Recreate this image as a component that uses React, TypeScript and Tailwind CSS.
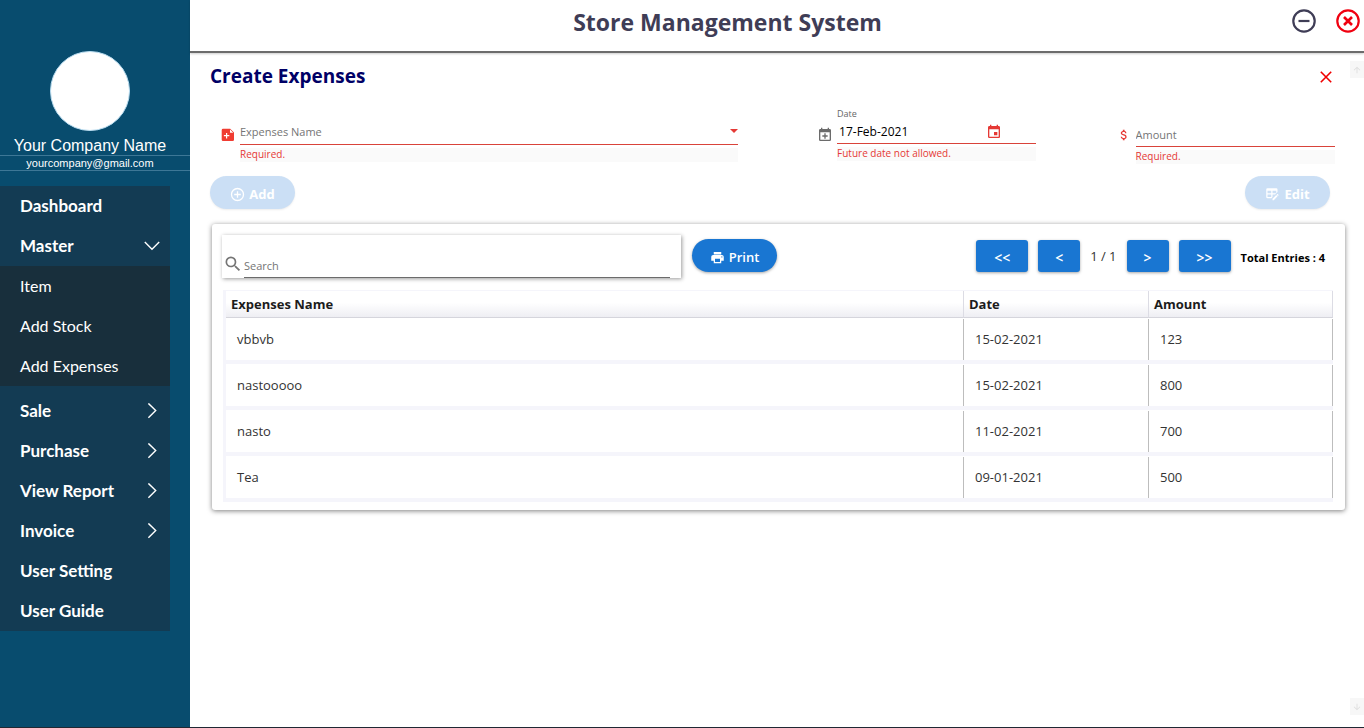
import React, { useState } from "react";
import { MdAttachMoney, MdEvent, MdLocalPrintshop, MdSearch, MdArrowUpward, MdArrowDownward } from "react-icons/md";

const expenses = [
  { name: "vbbvb", date: "15-02-2021", amount: "123" },
  { name: "nastooooo", date: "15-02-2021", amount: "800" },
  { name: "nasto", date: "11-02-2021", amount: "700" },
  { name: "Tea", date: "09-01-2021", amount: "500" },
];

const masterItems = ["Item", "Add Stock", "Add Expenses"];

const otherItems = [
  { label: "Sale", expandable: true },
  { label: "Purchase", expandable: true },
  { label: "View Report", expandable: true },
  { label: "Invoice", expandable: true },
  { label: "User Setting", expandable: false },
  { label: "User Guide", expandable: false },
];

function Chevron({ down = false }: { down?: boolean }) {
  return (
    <svg width="16" height="16" viewBox="0 0 16 16" fill="none" stroke="currentColor" strokeWidth="1.4" aria-hidden="true">
      <path d={down ? "M.8 4 8 11.2l7.2-7.2" : "M4.400.4 11.700 7.600l-7.300 7.200"} />
    </svg>
  );
}

function FileAddIcon() {
  return (
    <svg width="14" height="14" viewBox="0 0 14 14" aria-hidden="true">
      <path fill="#f03c32" d="M2 .8h7.2L13 4.6v7.2a1.3 1.3 0 0 1-1.3 1.3H2a1.3 1.3 0 0 1-1.3-1.3V2A1.3 1.3 0 0 1 2 .8Z" />
      <path fill="#fff" d="M9 1.6v3.2h3.3ZM5 5h1.2v2.100h2.100v1.200H6.200v2.100H5V8.300H2.900V7.100H5Z" />
    </svg>
  );
}

function CalendarPlusIcon() {
  return (
    <svg width="16" height="16" viewBox="0 0 24 24" fill="#6b6b6b" aria-hidden="true">
      <path d="M19 19V8H5v11h14M16 1h2v2h1a2 2 0 0 1 2 2v14a2 2 0 0 1-2 2H5a2 2 0 0 1-2-2V5c0-1.100.9-2 2-2h1V1h2v2h8V1m-5 8.500h2v3h3v2h-3v3h-2v-3H8v-2h3v-3Z" />
    </svg>
  );
}

function TableEditIcon() {
  return (
    <svg width="15" height="15" viewBox="0 0 24 24" fill="currentColor" aria-hidden="true">
      <path d="m21.700 13.350-1 1-2.050-2 1-1a.55.55 0 0 1 .77 0l1.280 1.280c.21.21.21.56 0 .72M12 18.940l6.060-6.120 2.060 2.060L14.060 21H12v-2.060M4 2h14a2 2 0 0 1 2 2v4.170L16.170 12H12v4.170L10.170 18H4a2 2 0 0 1-2-2V4a2 2 0 0 1 2-2m0 4v4h6V6H4m8 0v4h6V6h-6m-8 6v4h6v-4H4Z" />
    </svg>
  );
}

function MinusCircle() {
  return (
    <svg width="24" height="24" viewBox="0 0 24 24" fill="none" stroke="#3f3d56" strokeWidth="2.200" aria-hidden="true">
      <circle cx="12" cy="12" r="10.700" />
      <path d="M6.500 12h11" />
    </svg>
  );
}

function CloseCircle() {
  return (
    <svg width="24" height="24" viewBox="0 0 24 24" fill="none" stroke="#f00010" strokeWidth="2.200" aria-hidden="true">
      <circle cx="12" cy="12" r="10.700" />
      <path d="m8 8 8 8m0-8-8 8" strokeWidth="2.600" />
    </svg>
  );
}

function PageButton({ label, children, wide = false }: { label: string; children: React.ReactNode; wide?: boolean }) {
  return (
    <button
      type="button"
      aria-label={label}
      className={`${wide ? "w-[52px]" : "w-[42px]"} h-8 rounded-[3px] bg-[#1976d2] pt-1 text-sm font-semibold text-white shadow-[0_1px_3px_rgba(0,0,0,0.35)]`}
    >
      {children}
    </button>
  );
}

function Helper({ children }: { children: React.ReactNode }) {
  return <p className="mt-[3px] h-[14px] bg-[#fafafa] text-[10px] leading-3 text-[#e53935]">{children}</p>;
}

function Sidebar() {
  return (
    <aside className="w-[190px] shrink-0 bg-[#084c6e] text-white">
      <div className="flex flex-col items-center pt-[51px] font-['Liberation_Sans',sans-serif]">
        <div className="mr-2.5 size-20 rounded-full border border-[#b8dcf0] bg-white" />
        <p className="mr-2.5 mt-1.5 text-base leading-[18px]">Your Company Name</p>
        <p className="w-full border-y border-[#3d7796] pr-2.5 text-center text-[11px] leading-[14px]">yourcompany@gmail.com</p>
      </div>
      <nav className="mr-5 mt-[15px] bg-[#133b53] font-['Lato','Carlito',sans-serif] text-[17px] font-bold">
        <a href="#dashboard" className="flex h-10 items-center px-5">Dashboard</a>
        <a href="#master" className="flex h-10 items-center justify-between pl-5 pr-2.5">
          Master
          <Chevron down />
        </a>
        <div className="mb-[5px] bg-[#182f3c] text-base font-normal">
          {masterItems.map((item) => (
            <a key={item} href="#master" className="flex h-10 items-center px-5">{item}</a>
          ))}
        </div>
        {otherItems.map((item) => (
          <a key={item.label} href="#menu" className="flex h-10 items-center justify-between pl-5 pr-2.5">
            {item.label}
            {item.expandable && <Chevron />}
          </a>
        ))}
      </nav>
    </aside>
  );
}

function ExpenseForm() {
  const [date, setDate] = useState("17-Feb-2021");
  return (
    <form>
      <div className="ml-2.5 mr-2.5 grid h-[68px] grid-cols-[517fr_218fr_218fr] items-start gap-x-20">
        <div className="flex gap-[5px] pl-px pt-3">
          <span className="mt-2 shrink-0"><FileAddIcon /></span>
          <div className="relative min-w-0 grow">
            <select aria-label="Expenses Name" className="block h-[25px] w-full appearance-none border-b border-[#d9433a] bg-transparent text-[11px] text-[#757575]">
              <option>Expenses Name</option>
            </select>
            <span className="pointer-events-none absolute right-0 top-[9px] border-x-4 border-t-4 border-x-transparent border-t-[#e53935]" />
            <Helper>Required.</Helper>
          </div>
        </div>
        <div className="flex gap-1 pr-px">
          <span className="-ml-px mt-[19px] shrink-0"><CalendarPlusIcon /></span>
          <div className="min-w-0 grow">
            <label htmlFor="date" className="block text-[9px] leading-3 text-[#666]">Date</label>
            <div className="flex h-6 items-center border-b border-[#d9433a]">
              <input id="date" value={date} onChange={(e) => setDate(e.target.value)} className="w-0 grow bg-transparent pl-0.5 text-xs text-black" />
              <button type="button" aria-label="Open calendar" className="mr-[34px] text-[#e53935]"><MdEvent size={16} /></button>
            </div>
            <Helper>Future date not allowed.</Helper>
          </div>
        </div>
        <div className="flex gap-[5px] pt-[15px]">
          <span className="mt-[5px] shrink-0 text-[#e53935]"><MdAttachMoney size={14} /></span>
          <div className="min-w-0 grow">
            <input aria-label="Amount" placeholder="Amount" className="block h-6 w-full border-b border-[#d9433a] bg-transparent text-[11px] placeholder:text-[#757575]" />
            <Helper>Required.</Helper>
          </div>
        </div>
      </div>
      <div className="flex justify-between pr-[15px]">
        <button type="button" className="flex h-[33px] w-[85px] items-center justify-center gap-1 rounded-full bg-[#cbdff5] pt-1 text-[13px] font-bold text-white shadow-[0_1px_2px_rgba(0,0,0,0.08)]">
          <svg width="15" height="15" viewBox="0 0 15 15" fill="none" stroke="currentColor" strokeWidth="1.300" aria-hidden="true">
            <circle cx="7.500" cy="7.500" r="6" />
            <path d="M7.500 4.200v6.600M4.200 7.500h6.600" />
          </svg>
          Add
        </button>
        <button type="button" className="flex h-[33px] w-[85px] items-center justify-center gap-1 rounded-full bg-[#cbdff5] pt-1 text-[13px] font-bold text-white shadow-[0_1px_2px_rgba(0,0,0,0.08)]">
          <TableEditIcon />
          Edit
        </button>
      </div>
    </form>
  );
}

function ExpenseList() {
  return (
    <section className="mt-[15px] ml-0.5 rounded-[3px] bg-white pb-2 pl-[11px] pr-3 pt-[11px] shadow-[0_1px_5px_rgba(0,0,0,0.5)]">
      <div className="flex">
        <div className="-ml-px flex h-[43px] w-[459px] items-end pl-px pr-[11px] shadow-[1px_1px_4px_rgba(0,0,0,0.4)]">
          <MdSearch size={20} className="mb-1 shrink-0 text-[#757575]" />
          <input type="search" aria-label="Search" placeholder="Search" className="ml-px h-6 w-0 grow border-b border-[#6b6b6b] bg-transparent text-[11px] placeholder:text-[#757575]" />
        </div>
        <button type="button" className="ml-[11px] mt-1 flex h-[33px] w-[85px] items-center justify-center gap-1 rounded-full bg-[#1976d2] pt-1 text-[13px] font-semibold text-white shadow-[0_1px_3px_rgba(0,0,0,0.35)]">
          <MdLocalPrintshop size={15} />
          Print
        </button>
        <div className="ml-auto mr-2 flex h-[42px] items-center gap-2.5">
          <PageButton label="First page" wide>&lt;&lt;</PageButton>
          <PageButton label="Previous page">&lt;</PageButton>
          <span className="pt-0.5 text-[13px] text-[#333]">1 / 1</span>
          <PageButton label="Next page">&gt;</PageButton>
          <PageButton label="Last page" wide>&gt;&gt;</PageButton>
          <span className="pt-1 text-[11px] font-bold text-black">Total Entries : 4</span>
        </div>
      </div>
      <table className="mt-3 w-full table-fixed border-separate border-spacing-0 border-l-[3px] border-t border-[#f5f5fb] text-left text-[13px] text-[#333]">
        <colgroup>
          <col />
          <col className="w-[185px]" />
          <col className="w-[184px]" />
        </colgroup>
        <thead>
          <tr className="h-[27px] text-[#1c1c1c]">
            {["Expenses Name", "Date", "Amount"].map((title) => (
              <th key={title} className="border-b border-r border-b-[#d5d5dc] border-r-[#dcdce4] bg-linear-to-b from-white from-45% to-[#eeeef3] px-[5px] pt-0.5 font-bold">
                {title}
              </th>
            ))}
          </tr>
        </thead>
        <tbody>
          {expenses.map((row) => (
            <tr key={row.name} className="h-[46px]">
              {[row.name, row.date, row.amount].map((value) => (
                <td key={value} className="border-b-4 border-[#f5f5fb] pt-px">
                  <div className="flex h-[41px] items-center border-r border-[#bdbdbd] pl-[11px]">{value}</div>
                </td>
              ))}
            </tr>
          ))}
        </tbody>
      </table>
    </section>
  );
}

export default function App() {
  return (
    <div className="flex min-h-screen border-b border-[#202833] bg-white font-['Open_Sans','Noto_Sans',sans-serif]">
      <Sidebar />
      <main className="flex min-w-0 grow flex-col">
        <header className="flex h-[53px] items-start border-b-2 border-[#6c6c6c] shadow-[0_1px_2px_rgba(0,0,0,0.2)]">
          <h1 className="grow pr-[27px] pt-1.5 text-center text-[23px] font-bold leading-8 text-[#3f3d56]">Store Management System</h1>
          <div className="flex gap-5 pr-1 pt-[9px]">
            <button type="button" aria-label="Minimize"><MinusCircle /></button>
            <button type="button" aria-label="Exit"><CloseCircle /></button>
          </div>
        </header>
        <div className="flex grow">
          <div className="min-w-0 grow pl-5 pr-[5px] pt-[9px]">
            <div className="mb-[14px] flex h-8 items-start justify-between pr-[13px]">
              <h2 className="text-[19px] font-bold leading-7 text-[#000066]">Create Expenses</h2>
              <button type="button" aria-label="Close form" className="mt-[9px]">
                <svg width="12" height="12" viewBox="0 0 12 12" fill="none" stroke="#f00000" strokeWidth="1.600" aria-hidden="true">
                  <path d="m.8.8 10.400 10.400m0-10.400L.8 11.200" />
                </svg>
              </button>
            </div>
            <ExpenseForm />
            <ExpenseList />
          </div>
          <div className="flex w-[14px] shrink-0 flex-col justify-between pb-3 pt-2 text-[#dedede]">
            <button type="button" aria-label="Scroll up" className="flex h-[17px] items-center justify-center bg-[#f7f7f7]"><MdArrowUpward size={10} /></button>
            <button type="button" aria-label="Scroll down" className="flex h-[17px] items-center justify-center bg-[#f7f7f7]"><MdArrowDownward size={10} /></button>
          </div>
        </div>
      </main>
    </div>
  );
}
